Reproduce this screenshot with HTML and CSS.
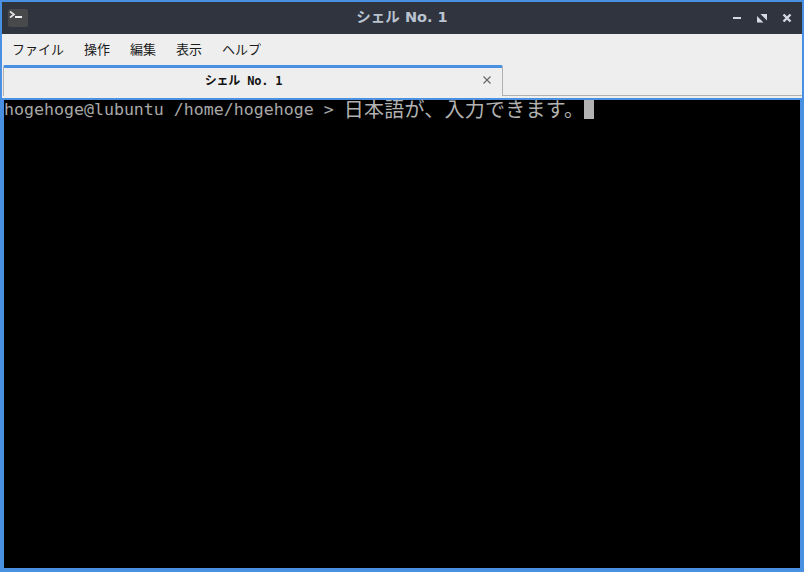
FILE: index.html
```html
<!DOCTYPE html>
<html lang="ja">
<head>
<meta charset="utf-8">
<title>シェル No. 1</title>
<link rel="stylesheet" href="styles.css">
</head>
<body>
<div class="window">
  <header class="titlebar">
    <span class="app-icon">
      <svg width="20" height="18" viewBox="0 0 20 18"><path class="prompt" d="M2 2.5 L6 5.5 L2 8.5" /><rect class="dash" x="7" y="7" width="7" height="2"/></svg>
    </span>
    <span class="title">シェル No. 1</span>
    <span class="controls">
      <svg width="12" height="12" viewBox="0 0 12 12"><rect class="ctl" x="2" y="5" width="8" height="2"/></svg>
      <svg width="12" height="12" viewBox="0 0 12 12"><path class="ctl" d="M4.5 2 H11 V8.5 Z M1 4 L7.5 10.5 H1 Z"/></svg>
      <svg width="12" height="12" viewBox="0 0 12 12"><path class="ctlx" d="M2.5 2.5 L9.5 9.5 M9.5 2.5 L2.5 9.5"/></svg>
    </span>
  </header>
  <nav class="menubar">
    <span>ファイル</span><span>操作</span><span>編集</span><span>表示</span><span>ヘルプ</span>
  </nav>
  <div class="tabbar">
    <div class="tab">
      <span class="tab-label">シェル No. 1</span>
      <svg class="tab-close" width="10" height="10" viewBox="0 0 10 10"><path d="M1.5 1.5 L8.5 8.5 M8.5 1.5 L1.5 8.5"/></svg>
    </div>
    <div class="tab-rest"></div>
  </div>
  <main class="terminal">
    <span class="ascii">hogehoge@lubuntu /home/hogehoge &gt; </span><span class="cjk">日本語が、入力できます。</span><span class="cursor"></span>
  </main>
</div>
</body>
</html>
```
FILE: styles.css
```css
html, body {
  margin: 0;
  padding: 0;
  width: 804px;
  height: 572px;
  overflow: hidden;
}
.window {
  box-sizing: border-box;
  width: 804px;
  height: 572px;
  display: flex;
  flex-direction: column;
  background: #4a90e2;
  padding: 2px 2px 0 2px;
}
.titlebar {
  height: 32px;
  flex: none;
  background: #2f343f;
  display: flex;
  align-items: center;
  position: relative;
  padding: 0 6px;
}
.app-icon {
  width: 20px;
  height: 18px;
  background: #48494b;
  border-radius: 2px;
  display: block;
  line-height: 0;
}
.prompt { fill: none; stroke: #e6e6e6; stroke-width: 1.6; }
.dash { fill: #f0f0f0; }
.title {
  position: absolute;
  left: 0;
  right: 0;
  top: 0;
  text-align: center;
  color: #bac3cf;
  font: bold 14.5px/31px "DejaVu Sans", "Noto Sans CJK JP", sans-serif;
}
.controls {
  margin-left: auto;
  display: flex;
  gap: 13px;
  padding-right: 3px;
  align-items: center;
  margin-top: -1px;
}
.ctl { fill: #d3dae3; }
.ctlx { fill: none; stroke: #d3dae3; stroke-width: 2.4; }
.menubar {
  height: 29px;
  padding: 0 10px 2px;
  flex: none;
  background: #eeeeee;
  display: flex;
  align-items: center;
  gap: 20px;
  font: 13px "Noto Sans CJK JP", sans-serif;
  color: #1a1a1a;
}
.tabbar {
  height: 33px;
  flex: none;
  background: #eeeeee;
  display: flex;
}
.tab {
  box-sizing: border-box;
  width: 500px;
  height: 31px;
  padding-bottom: 5px;
  margin-left: 1px;
  border-top: 3px solid #4a90e2;
  border-left: 1px solid #b0b0b0;
  border-right: 1px solid #b0b0b0;
  border-radius: 2px 2px 0 0;
  background: #eeeeee;
  display: flex;
  align-items: center;
}
.tab-label {
  flex: 1;
  text-align: center;
  font: bold 12px "DejaVu Sans Mono", "Noto Sans CJK JP", monospace;
  letter-spacing: -0.2px;
  color: #111;
  padding-left: 1px;
}
.tab-close {
  margin-right: 10px;
}
.tab-close path { stroke: #666; stroke-width: 1.1; fill: none; }
.tab-rest {
  flex: 1;
  height: 30px;
  border-bottom: 1px solid #b0b0b0;
}
.terminal {
  flex: 1;
  background: #000;
  margin: 2px 2px 4px;
  color: #b2b2b2;
  display: flex;
  align-items: flex-start;
  white-space: pre;
}
.ascii { font: 16.6px/20px "DejaVu Sans Mono", monospace; color: #a8a8a8; }
.cjk { font: 20px/18px "Noto Sans CJK JP", sans-serif; letter-spacing: 0.25px; }
.cursor { width: 10px; height: 19px; background: #b2b2b2; margin-left: 0; }
```
